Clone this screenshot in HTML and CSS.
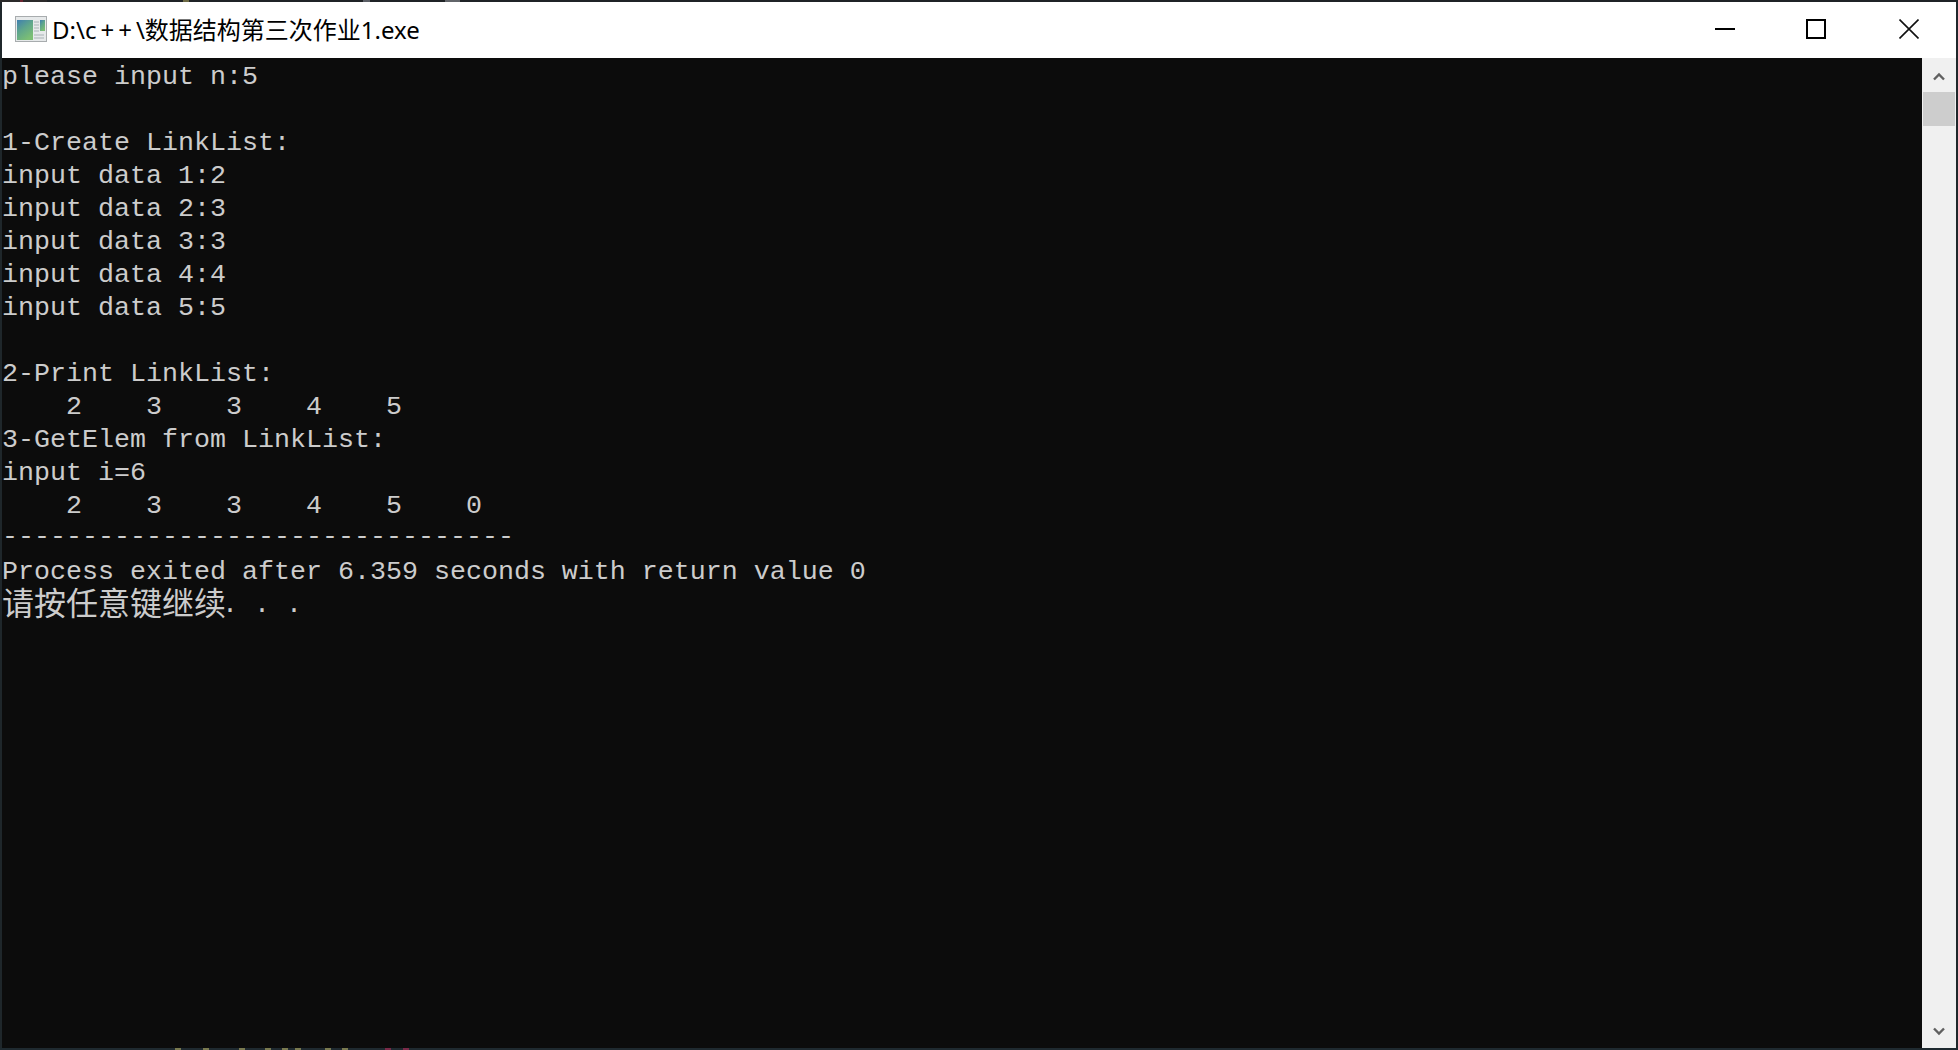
FILE: index.html
```html
<!DOCTYPE html>
<html lang="zh">
<head>
<meta charset="utf-8">
<title>D:\c++\数据结构第三次作业1.exe</title>
<link rel="stylesheet" href="styles.css">
</head>
<body>
<div class="window">
  <div class="edge edge-top"></div>
  <div class="frame">
    <header class="titlebar">
      <svg class="app-icon" width="32" height="26" viewBox="0 0 32 26">
        <defs>
          <linearGradient id="pane" x1="0" y1="0" x2="0.6" y2="1">
            <stop offset="0" stop-color="#3f7fb0"/>
            <stop offset="0.5" stop-color="#5fa68c"/>
            <stop offset="1" stop-color="#7cbf74"/>
          </linearGradient>
        </defs>
        <rect x="0.5" y="0.5" width="31" height="25" fill="#e6e9ea" stroke="#a8acae"/>
        <rect x="2" y="4" width="16" height="20" fill="url(#pane)"/>
        <rect x="25" y="4" width="5" height="11" fill="url(#pane)"/>
        <path d="M19 6h5M19 9h5M19 12h5M19 15h5M19 19h10M19 22h10" stroke="#a9b2b6" stroke-width="1"/>
      </svg>
      <span class="title">D:\c<span class="plus">++</span>\数据结构第三次作业1.exe</span>
      <div class="controls">
        <svg class="ctl" width="20" height="20" viewBox="0 0 20 20"><path d="M0 10h20" stroke="#000" stroke-width="2"/></svg>
        <svg class="ctl ctl-max" width="20" height="20" viewBox="0 0 20 20"><rect x="1" y="1" width="18" height="18" fill="none" stroke="#000" stroke-width="2"/></svg>
        <svg class="ctl ctl-close" width="20" height="20" viewBox="0 0 20 20"><path d="M0.5 0.5L19.5 19.5M19.5 0.5L0.5 19.5" stroke="#111" stroke-width="1.6"/></svg>
      </div>
    </header>
    <main class="body">
      <div class="console">
        <div class="line">please input n:5</div>
        <div class="line"> </div>
        <div class="line">1-Create LinkList:</div>
        <div class="line">input data 1:2</div>
        <div class="line">input data 2:3</div>
        <div class="line">input data 3:3</div>
        <div class="line">input data 4:4</div>
        <div class="line">input data 5:5</div>
        <div class="line"> </div>
        <div class="line">2-Print LinkList:</div>
        <div class="line">    2    3    3    4    5</div>
        <div class="line">3-GetElem from LinkList:</div>
        <div class="line">input i=6</div>
        <div class="line">    2    3    3    4    5    0</div>
        <div class="line rule">--------------------------------</div>
        <div class="line">Process exited after 6.359 seconds with return value 0</div>
        <div class="line"><span class="cjk">请按任意键继续</span>. . .</div>
      </div>
      <div class="scrollbar">
        <div class="arrow arrow-up">
          <svg width="12" height="9" viewBox="0 0 12 9"><path d="M1 7.5L6 2.5L11 7.5" fill="none" stroke="#606060" stroke-width="2.4"/></svg>
        </div>
        <div class="thumb"></div>
        <div class="track"></div>
        <div class="arrow">
          <svg width="12" height="9" viewBox="0 0 12 9"><path d="M1 1.5L6 6.5L11 1.5" fill="none" stroke="#606060" stroke-width="2.4"/></svg>
        </div>
      </div>
    </main>
  </div>
  <div class="edge edge-bottom"></div>
</div>
</body>
</html>
```
FILE: styles.css
```css
* { box-sizing: border-box; }
html, body { margin: 0; height: 100%; }
body { background: #1f272b; overflow: hidden; }
.window {
  width: 1958px;
  height: 1050px;
  display: flex;
  flex-direction: column;
}
.edge {
  height: 2px;
  flex: none;
  background-repeat: no-repeat;
}
.edge-top {
  background-color: #1f2326;
  background-image:
    linear-gradient(#6a2530, #6a2530),
    linear-gradient(#2b2a2a, #2b2a2a),
    linear-gradient(#6d6a45, #6d6a45),
    linear-gradient(#5b5f66, #5b5f66),
    linear-gradient(#62656a, #62656a);
  background-size: 3px 2px, 47px 2px, 6px 2px, 7px 2px, 15px 2px;
  background-position: 20px 0, 0 0, 183px 0, 363px 0, 445px 0;
}
.edge-bottom {
  background-color: #1f2a30;
  background-image:
    linear-gradient(#7a7a50, #7a7a50),
    linear-gradient(#7a7a50, #7a7a50),
    linear-gradient(#7a7a50, #7a7a50),
    linear-gradient(#7a7a50, #7a7a50),
    linear-gradient(#7a7a50, #7a7a50),
    linear-gradient(#7a7a50, #7a7a50),
    linear-gradient(#7a7a50, #7a7a50),
    linear-gradient(#7a7a50, #7a7a50),
    linear-gradient(#7a2a48, #7a2a48),
    linear-gradient(#7a2a48, #7a2a48);
  background-size: 6px 2px;
  background-position: 175px 0, 203px 0, 239px 0, 265px 0, 282px 0, 295px 0, 325px 0, 342px 0, 385px 0, 403px 0;
}
.frame {
  flex: 1;
  min-height: 0;
  padding: 0 2px;
  display: flex;
  flex-direction: column;
}
.titlebar {
  height: 56px;
  flex: none;
  background: #fff;
  display: flex;
  align-items: center;
  padding-left: 13px;
}
.app-icon {
  flex: none;
  margin-bottom: 2px;
}
.title {
  margin-left: 5px;
  margin-bottom: 4px;
  font-family: "Noto Sans", "Noto Sans CJK SC", sans-serif;
  font-size: 24px;
  color: #000;
  white-space: pre;
}
.plus {
  letter-spacing: 4px;
  margin-left: 4px;
}
.controls {
  margin-left: auto;
  margin-bottom: 2px;
  display: flex;
  padding-right: 37px;
}
.ctl { display: block; shape-rendering: crispEdges; }
.ctl-max { margin-left: 71px; }
.ctl-close { margin-left: 73px; shape-rendering: auto; }
.body {
  flex: 1;
  display: flex;
  min-height: 0;
}
.console {
  flex: 1;
  background: #0c0c0c;
  color: #cccccc;
  font-family: "Liberation Mono", "Noto Sans CJK SC", monospace;
  font-size: 26.67px;
  padding-top: 3px;
}
.line {
  height: 33px;
  line-height: 33px;
  white-space: pre;
}
.rule { transform: translateY(-2px); }
.cjk {
  display: inline-block;
  height: 33px;
  margin-right: -4px;
  font-family: "Noto Sans CJK SC", sans-serif;
  font-size: 32px;
  line-height: 33px;
  vertical-align: top;
  transform: translateY(-4px);
}
.scrollbar {
  width: 34px;
  flex: none;
  background: #f0f0f0;
  display: flex;
  flex-direction: column;
}
.arrow {
  height: 34px;
  flex: none;
  display: flex;
  align-items: center;
  justify-content: center;
}
.arrow-up { padding-top: 3px; }
.thumb {
  height: 34px;
  flex: none;
  margin: 0 1px;
  background: #cdcdcd;
}
.track { flex: 1; }
```
